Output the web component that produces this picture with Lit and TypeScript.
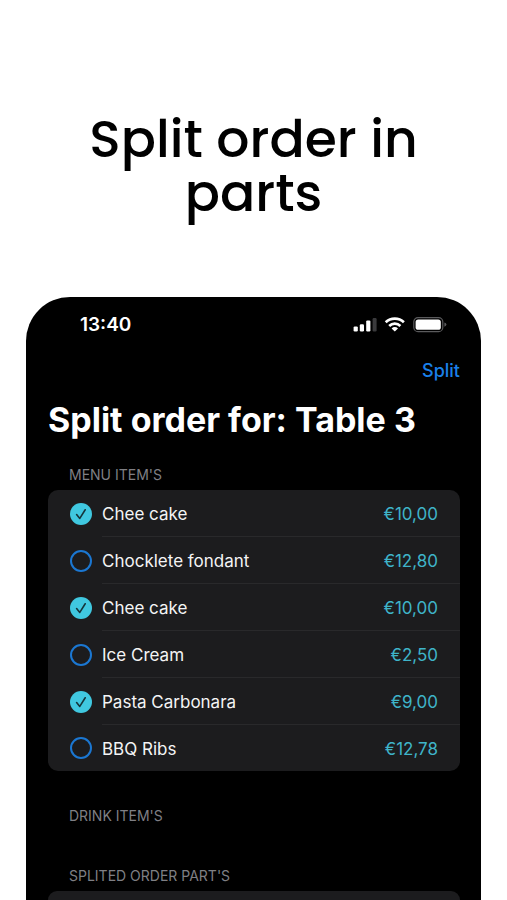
import { LitElement, html, css, svg } from "lit";
import { customElement, property, state } from "lit/decorators.js";

interface Item {
  name: string;
  price: string;
  picked: boolean;
}

@customElement("status-bar")
class StatusBar extends LitElement {
  static styles = css`
    :host {
      display: flex;
      justify-content: space-between;
      align-items: center;
      height: 24px;
      padding: 0 34px 0 54px;
    }
    .time {
      font-size: 19px;
      line-height: 24px;
      font-weight: 600;
      color: #fff;
    }
    .icons {
      display: block;
      width: 94px;
      height: 20px;
    }
  `;

  render() {
    return html`
      <span class="time">13:40</span>
      <svg class="icons" viewBox="0 0 94 20" aria-hidden="true">
        ${svg`
          <rect x="0.6" y="11.4" width="4.2" height="5" rx="1.2" fill="#fff"/>
          <rect x="6.8" y="9.2" width="4.2" height="7.2" rx="1.2" fill="#fff"/>
          <rect x="13.2" y="5.4" width="4.2" height="11" rx="1.2" fill="#fff"/>
          <rect x="19.6" y="3" width="4" height="13.4" rx="1.2" fill="#3a3a3c"/>
          <g fill="none" stroke="#fff" stroke-width="2.7">
            <path d="M32.7 7.3A13.3 13.3 0 0 1 50.9 7.3"/>
            <path d="M36.2 10.9A8.2 8.2 0 0 1 47.4 10.9"/>
          </g>
          <path d="M41.8 16.6L38.6 13.4A4.6 4.6 0 0 1 45 13.4Z" fill="#fff"/>
          <rect x="60.8" y="2.6" width="29" height="14" rx="4.2" fill="none" stroke="#5a5a5c" stroke-width="1.2"/>
          <rect x="62.6" y="4.4" width="25.2" height="10.4" rx="2.6" fill="#fff"/>
          <path d="M91.4 7.5Q93.4 8.2 93.4 9.6Q93.4 11 91.4 11.7Z" fill="#5a5a5c"/>
        `}
      </svg>
    `;
  }
}

@customElement("order-row")
class OrderRow extends LitElement {
  @property({ attribute: false }) item!: Item;

  static styles = css`
    :host {
      display: block;
    }
    .row {
      display: flex;
      align-items: center;
      gap: 10px;
      padding-left: 22px;
      cursor: pointer;
    }
    .tick {
      appearance: none;
      box-sizing: border-box;
      flex: none;
      width: 22px;
      height: 22px;
      margin: 0;
      display: grid;
      place-items: center;
      border: 2px solid #1b77d2;
      border-radius: 50%;
      cursor: pointer;
    }
    .tick:checked {
      border: 0;
      background: #40c8e0;
    }
    .choice {
      display: grid;
      place-items: center;
    }
    .choice > * {
      grid-area: 1 / 1;
    }
    .mark {
      width: 22px;
      height: 22px;
      pointer-events: none;
    }
    .body {
      box-sizing: border-box;
      flex: 1;
      display: flex;
      justify-content: space-between;
      align-items: center;
      height: 47px;
      padding: 2px 22px 0 0;
      border-bottom: 1px solid #29292b;
      font-size: 17px;
      line-height: 24px;
    }
    :host(:last-child) .body {
      height: 46px;
      border-bottom: 0;
    }
    .name {
      color: #f4f4f5;
    }
    .price {
      color: #3fb4c9;
    }
  `;

  private toggle(e: Event) {
    this.item = { ...this.item, picked: (e.target as HTMLInputElement).checked };
  }

  render() {
    const { name, price, picked } = this.item;
    return html`
      <label class="row">
        <span class="choice">
          <input class="tick" type="checkbox" .checked=${picked} @change=${this.toggle} />
          ${picked
            ? html`<svg class="mark" viewBox="0 0 22 22" aria-hidden="true">
                <path d="M6.6 11.6L9.8 15.4L15.2 6.8" fill="none" stroke="#15353b" stroke-width="1.6" stroke-linecap="round" stroke-linejoin="round" />
              </svg>`
            : null}
        </span>
        <span class="body">
          <span class="name">${name}</span>
          <span class="price">${price}</span>
        </span>
      </label>
    `;
  }
}

@customElement("app-root")
class AppRoot extends LitElement {
  @state() private items: Item[] = [
    { name: "Chee cake", price: "€10,00", picked: true },
    { name: "Chocklete fondant", price: "€12,80", picked: false },
    { name: "Chee cake", price: "€10,00", picked: true },
    { name: "Ice Cream", price: "€2,50", picked: false },
    { name: "Pasta Carbonara", price: "€9,00", picked: true },
    { name: "BBQ Ribs", price: "€12,78", picked: false },
  ];

  static styles = css`
    :host {
      box-sizing: border-box;
      display: flex;
      flex-direction: column;
      min-height: 100vh;
      padding: 0 26px;
      background: #fff;
      font-family: Inter, "Liberation Sans", sans-serif;
    }
    .headline {
      max-width: 360px;
      margin: 0 auto;
      padding: 112px 0 77px;
      font-family: Poppins, Inter, sans-serif;
      font-size: 52px;
      line-height: 54px;
      font-weight: 500;
      text-align: center;
      color: #000;
    }
    .phone {
      flex: 1;
      display: flex;
      flex-direction: column;
      padding: 16px 21px 0 22px;
      border-radius: 44px 44px 0 0;
      background: #000;
    }
    status-bar {
      margin: 0 -21px 0 -22px;
    }
    .nav {
      display: flex;
      justify-content: flex-end;
      padding-top: 22px;
    }
    .split {
      padding: 0;
      border: 0;
      background: none;
      font: inherit;
      font-size: 18px;
      line-height: 24px;
      font-weight: 500;
      color: #1a80ea;
      cursor: pointer;
    }
    .title {
      margin: 0;
      padding-top: 16px;
      font-size: 34px;
      line-height: 42px;
      font-weight: 700;
      color: #fff;
    }
    .label {
      margin: 0;
      padding: 25px 21px 6px;
      font-size: 14px;
      line-height: 18px;
      font-weight: 400;
      color: #7f7f84;
    }
    .label.wide {
      padding-top: 36px;
    }
    .card {
      border-radius: 10px;
      background: #1c1c1e;
    }
    .card.rest {
      flex: 1;
      min-height: 9px;
      border-radius: 10px 10px 0 0;
    }
  `;

  render() {
    return html`
      <h1 class="headline">Split order in parts</h1>
      <main class="phone">
        <status-bar></status-bar>
        <nav class="nav"><button class="split" type="button">Split</button></nav>
        <h2 class="title">Split order for: Table 3</h2>
        <h3 class="label">MENU ITEM'S</h3>
        <section class="card">
          ${this.items.map((item) => html`<order-row .item=${item}></order-row>`)}
        </section>
        <h3 class="label wide">DRINK ITEM'S</h3>
        <h3 class="label wide">SPLITED ORDER PART'S</h3>
        <section class="card rest"></section>
      </main>
    `;
  }
}
